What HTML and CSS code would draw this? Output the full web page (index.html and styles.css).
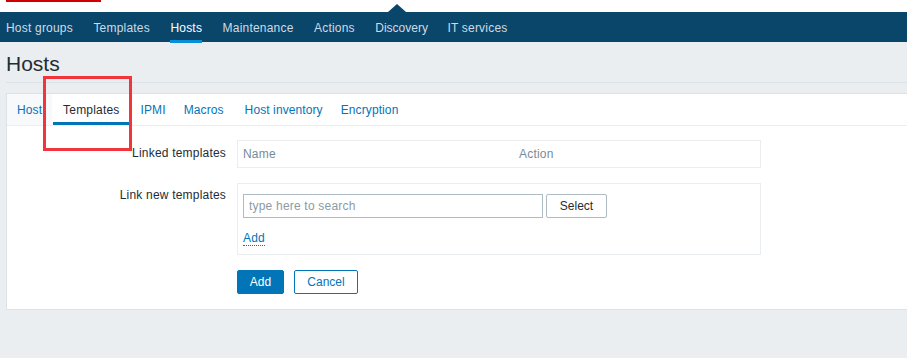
FILE: index.html
```html
<!DOCTYPE html>
<html>
<head>
<meta charset="utf-8">
<link rel="stylesheet" href="styles.css">
</head>
<body>
<div class="topstrip">
  <span class="redbar"></span>
  <span class="caret"></span>
</div>
<nav class="topnav">
  <a class="nav-item">Host groups</a>
  <a class="nav-item">Templates</a>
  <a class="nav-item active">Hosts</a>
  <a class="nav-item">Maintenance</a>
  <a class="nav-item">Actions</a>
  <a class="nav-item">Discovery</a>
  <a class="nav-item">IT services</a>
</nav>
<header class="page-header">
  <h1 class="page-title">Hosts</h1>
</header>
<main class="panel">
  <div class="tabs">
    <a class="tab first">Host</a>
    <a class="tab active">Templates</a>
    <a class="tab narrow">IPMI</a>
    <a class="tab">Macros</a>
    <a class="tab narrow">Host inventory</a>
    <a class="tab">Encryption</a>
  </div>
  <div class="form">
    <div class="form-label">Linked templates</div>
    <div class="form-field">
      <div class="box linked">
        <span class="col-name">Name</span>
        <span class="col-action">Action</span>
      </div>
    </div>
    <div class="form-label second">Link new templates</div>
    <div class="form-field">
      <div class="box newtpl">
        <div class="search-row">
          <div class="search-input">type here to search</div>
          <button class="btn-alt">Select</button>
        </div>
        <a class="link-add">Add</a>
      </div>
    </div>
    <div class="form-label"></div>
    <div class="form-field actions">
      <button class="btn-primary">Add</button>
      <button class="btn-outline">Cancel</button>
    </div>
  </div>
  <div class="annot"></div>
</main>
</body>
</html>
```
FILE: styles.css
```css
html, body {
  margin: 0;
  padding: 0;
  overflow: hidden;
}
body {
  background: #ebeef0;
  font-family: "Liberation Sans", Arial, sans-serif;
  font-size: 12px;
  letter-spacing: 0.2px;
  color: #1f2c33;
  height: 358px;
}
.topstrip {
  height: 12px;
  background: #ffffff;
  display: flex;
}
.redbar {
  display: block;
  margin-left: 6px;
  width: 95px;
  height: 2px;
  background: #d10000;
  align-self: flex-start;
}
.caret {
  display: block;
  margin-left: 287px;
  width: 0;
  height: 0;
  border-left: 9px solid transparent;
  border-right: 9px solid transparent;
  border-bottom: 8px solid #0a466a;
  align-self: flex-end;
}
.topnav {
  height: 30px;
  background: #0a466a;
  display: flex;
  gap: 20.5px;
  padding-left: 6px;
}
.nav-item {
  position: relative;
  line-height: 30px;
  padding-top: 1px;
  box-sizing: border-box;
  height: 30px;
  color: #cfdbe4;
  white-space: nowrap;
}
.nav-item:nth-child(6) {
  letter-spacing: 0;
  margin-right: -1px;
}
.nav-item.active {
  color: #ffffff;
}
.nav-item.active::after {
  content: "";
  position: absolute;
  left: 0;
  right: 0;
  bottom: -1px;
  height: 3px;
  background: #0b8ed8;
}
.page-header {
  margin-left: 6px;
  height: 40px;
  border-bottom: 1px solid #dde2e6;
  display: flex;
  align-items: center;
}
.page-title {
  margin: 0;
  font-size: 21px;
  font-weight: normal;
  letter-spacing: 0;
  color: #1f2c33;
  padding-top: 3px;
}
.panel {
  position: relative;
  margin: 10px -4px 0 6px;
  background: #ffffff;
  border: 1px solid #dde2e6;
}
.tabs {
  display: flex;
  gap: 1px;
  height: 31px;
  border-bottom: 1px solid #ebeef0;
  background: #ffffff;
  letter-spacing: 0.1px;
}
.tab {
  position: relative;
  padding: 2px 10px 0 10px;
  line-height: 29px;
  color: #0275b8;
  white-space: nowrap;
}
.tab.narrow {
  padding-right: 7px;
}
.tab.first {
  background: #f7f9fb;
}
.tab.active {
  color: #1f2c33;
  letter-spacing: 0.2px;
}
.tab.active::after {
  content: "";
  position: absolute;
  left: 0;
  right: 0;
  bottom: 0;
  height: 3px;
  background: #0275b8;
}
.form {
  display: grid;
  grid-template-columns: 219px 524px;
  column-gap: 11px;
  row-gap: 15px;
  padding: 14px 0 15px 0;
}
.form-label {
  text-align: right;
  padding-top: 6px;
  line-height: 14px;
}
.form-label.second {
  padding-top: 5px;
}
.box {
  border: 1px solid #ebeef0;
  box-sizing: border-box;
}
.linked {
  height: 28px;
  display: flex;
  align-items: center;
  color: #768d99;
}
.col-name {
  width: 271px;
  padding-left: 5px;
}
.col-action {
  padding-left: 5px;
}
.newtpl {
  height: 72px;
  padding: 10px 5px 0 5px;
}
.search-row {
  display: flex;
  gap: 3px;
}
.search-input {
  box-sizing: border-box;
  width: 300px;
  height: 24px;
  border: 1px solid #acbbc4;
  color: #8a9ba5;
  padding-left: 5px;
  line-height: 22px;
}
.btn-alt {
  box-sizing: border-box;
  width: 61px;
  height: 24px;
  border: 1px solid #acbbc4;
  border-radius: 2px;
  background: #ffffff;
  color: #1f2c33;
  font: inherit;
  font-size: 12px;
  padding: 0;
}
.link-add {
  display: inline-block;
  margin-top: 13px;
  color: #0275b8;
  border-bottom: 1px dotted #0275b8;
  line-height: 14px;
}
.actions {
  display: flex;
  gap: 10px;
}
.btn-primary {
  box-sizing: border-box;
  width: 47px;
  height: 24px;
  border: 1px solid #0275b8;
  border-radius: 2px;
  background: #0275b8;
  color: #ffffff;
  font: inherit;
  font-size: 12px;
  padding: 0;
}
.btn-outline {
  box-sizing: border-box;
  width: 64px;
  height: 24px;
  border: 1px solid #0275b8;
  border-radius: 2px;
  background: #ffffff;
  color: #0275b8;
  font: inherit;
  font-size: 12px;
  padding: 0;
}
.annot {
  position: absolute;
  left: 36px;
  top: -18px;
  width: 89px;
  height: 75px;
  box-sizing: border-box;
  border: 3px solid #f0363c;
}
```
